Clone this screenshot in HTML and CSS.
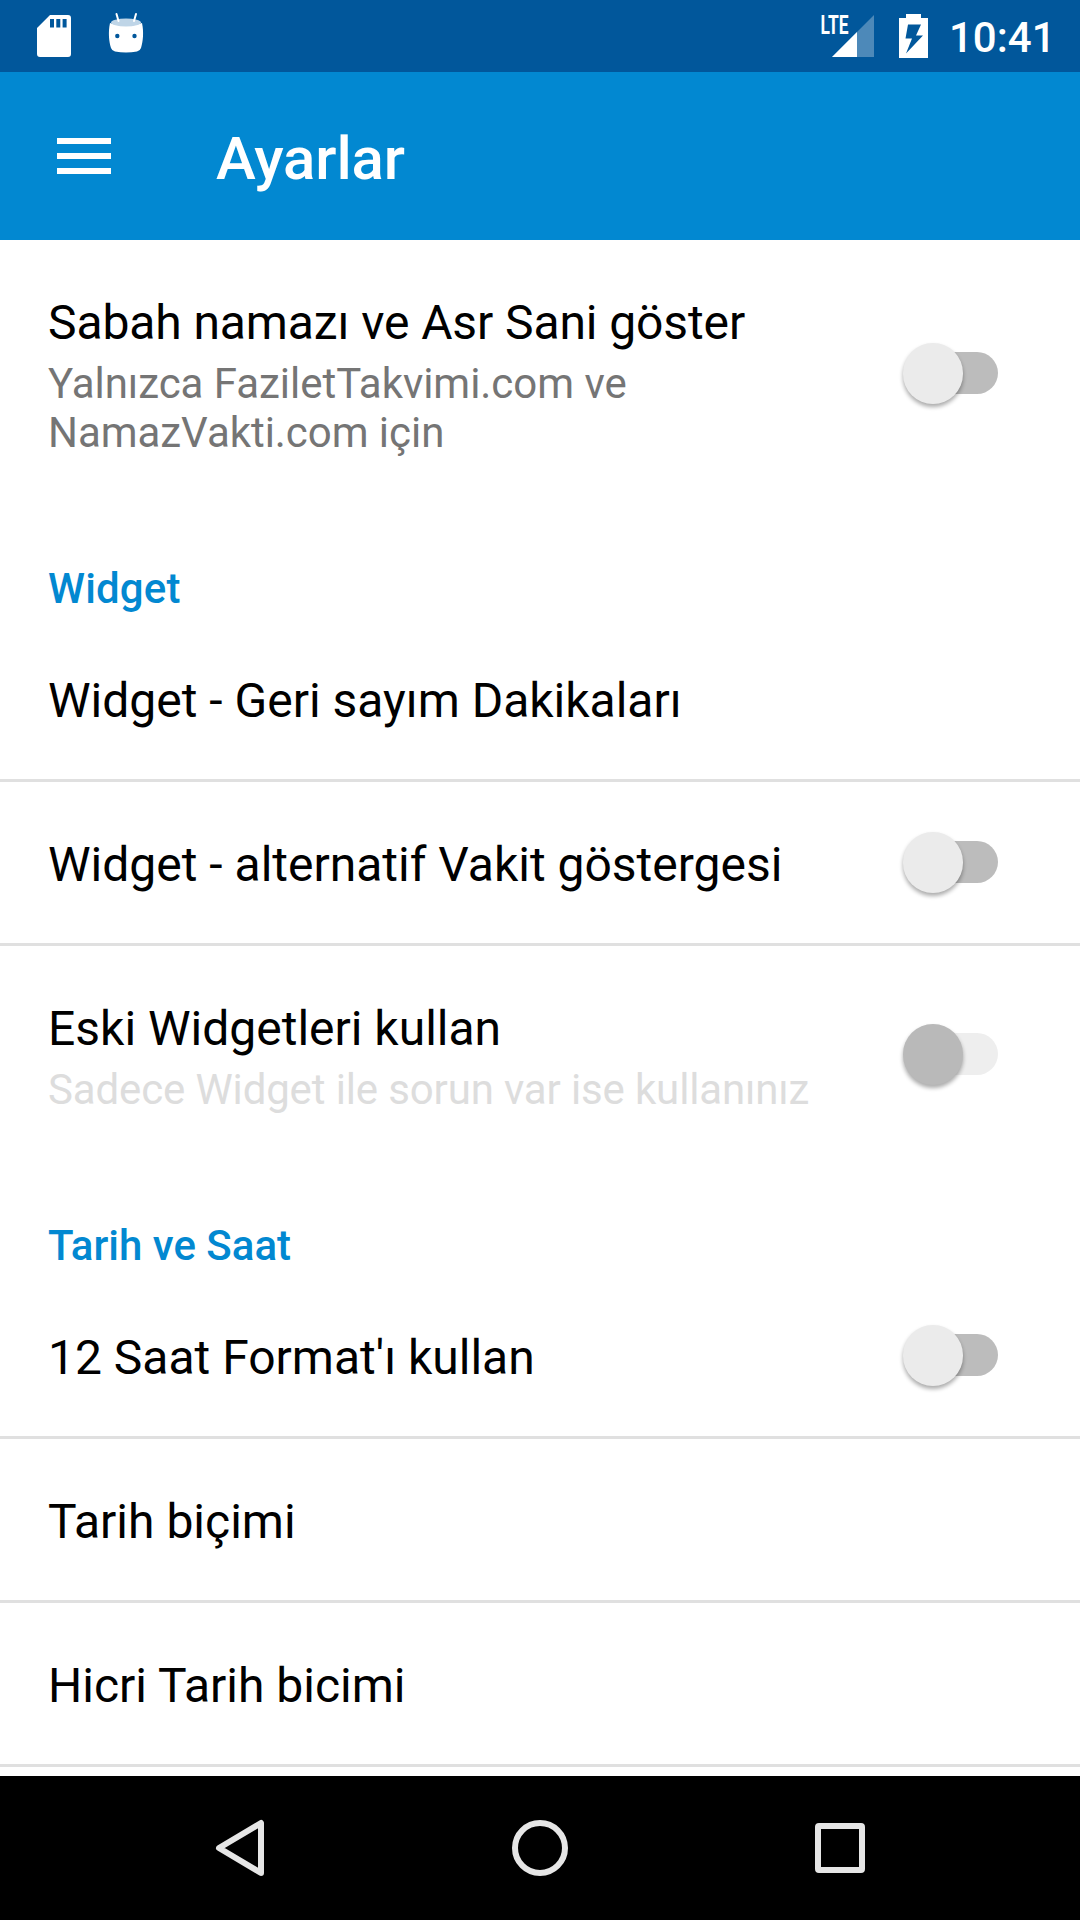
FILE: index.html
```html
<!DOCTYPE html>
<html lang="tr"><head><meta charset="utf-8"><title>Ayarlar</title><link rel="stylesheet" href="styles.css"></head>
<body>
<header class="status">
<svg class="status-left" width="160" height="72" viewBox="0 0 160 72"><path fill="#fff" fill-rule="evenodd" d="M50 15h18q3 0 3 3v36q0 3-3 3H40q-3 0-3-3V28ZM50 19v8.500h4V19Zm6.300 0v8.500h4V19Zm6.300 0v8.500h4V19Z"/><path fill="#fff" d="M110 23q16 6 32 0c2 9 1 19-1 25q-1 3-4 3.500q-11 2-22 0-3-.5-4-3.500c-2-6-3-16-1-25Z"/><ellipse cx="126" cy="22.500" rx="15" ry="4" fill="#bfd5e7"/><path stroke="#fff" stroke-width="2" stroke-linecap="round" d="m116.500 14 2 7m17.500-7-2 7"/><circle cx="117.300" cy="36" r="2.200" fill="#01579b"/><circle cx="134.500" cy="36" r="2.200" fill="#01579b"/></svg>
<svg class="status-right" width="130" height="72" viewBox="810 0 130 72"><path fill="#4d89b9" d="M874 15v42h-42Z"/><path fill="#fff" d="M857 32v25h-25Z"/><text class="lte" x="820.500" y="33.500" textLength="28" lengthAdjust="spacingAndGlyphs">LTE</text><path fill="#fff" fill-rule="evenodd" d="M906 14h15v4h7v40h-29V18h7ZM908 24.500l-2.500 14h6.500l-6 15 17-18h-7l5-11Z"/></svg>
<span class="time">10:41</span>
</header>
<div class="toolbar"><svg width="54" height="36" viewBox="0 0 54 36"><path fill="#fff" d="M0 0h54v6H0Zm0 15h54v6H0Zm0 15h54v6H0Z"/></svg><h1>Ayarlar</h1></div>
<main class="settings">
<section class="row first"><div><h3 class="snug">Sabah namazı ve Asr Sani göster</h3><p>Yalnızca FaziletTakvimi.com ve<br>NamazVakti.com için</p></div><i class="switch"></i></section>
<h2 class="wide">Widget</h2>
<section class="row"><h3>Widget - Geri sayım Dakikaları</h3></section>
<section class="row line"><h3>Widget - alternatif Vakit göstergesi</h3><i class="switch"></i></section>
<section class="row line old"><div><h3>Eski Widgetleri kullan</h3><p>Sadece Widget ile sorun var ise kullanınız</p></div><i class="switch disabled"></i></section>
<h2>Tarih ve Saat</h2>
<section class="row"><h3>12 Saat Format'ı kullan</h3><i class="switch"></i></section>
<section class="row line"><h3>Tarih biçimi</h3></section>
<section class="row line"><h3>Hicri Tarih bicimi</h3></section>
<div class="line"></div>
</main>
<nav><svg width="1080" height="144" viewBox="0 0 1080 144" fill="none" stroke="#e6e6e6" stroke-width="6"><path stroke-linejoin="round" d="M261 47v50l-42-25Z"/><circle cx="540" cy="72" r="25"/><rect x="818" y="50" width="44" height="44" rx="1" stroke-linejoin="round"/></svg></nav>
</body></html>
```
FILE: styles.css
```css
* { box-sizing: border-box; }
body { margin: 0; width: 1080px; height: 1920px; display: flex; flex-direction: column; overflow: hidden; background: #fff; color: #000; font-family: Roboto, sans-serif; }
h1, h2, h3, p { margin: 0; }
svg { display: block; flex: none; }
.status { height: 72px; flex: none; display: flex; background: #01579b; color: #fff; }
.status-right { margin-left: 650px; }
.lte { font: 700 26px Roboto, sans-serif; fill: #fff; }
.time { margin-left: 9px; font-size: 42px; line-height: 75px; font-weight: 500; white-space: nowrap; }
.toolbar { height: 168px; flex: none; display: flex; align-items: center; padding-left: 57px; background: #0288d1; color: #fff; }
h1 { margin-left: 105px; font-size: 60px; font-weight: 500; line-height: 70px; padding-top: 6px; letter-spacing: -.1px; }
.settings { height: 1536px; flex: none; overflow: hidden; }
.row { height: 164px; display: flex; align-items: flex-start; justify-content: space-between; padding: 57px 82px 0 48px; }
.line { border-top: 3px solid #e0e0e0; }
.row.line { padding-top: 54px; }
.row.first { height: 266px; padding-top: 54px; }
.row.old { height: 220px; }
h3 { font-size: 48px; line-height: 57px; font-weight: 400; white-space: nowrap; }
.snug { letter-spacing: -.1px; }
p { margin-top: 8px; font-size: 42px; line-height: 49px; color: #757575; white-space: nowrap; letter-spacing: -.04px; }
.old p { color: #ddd; letter-spacing: -.14px; }
h2 { height: 109px; padding: 58px 48px 0; font-size: 42px; line-height: 49px; font-weight: 500; color: #0288d1; }
.wide { letter-spacing: .15px; }
.switch { position: relative; width: 96px; height: 62px; margin-top: -5px; flex: none; display: flex; align-items: center; }
.first .switch { margin-top: 48px; }
.old .switch { margin-top: 23px; }
.switch::before { content: ""; width: 78px; height: 42px; margin-left: 18px; border-radius: 21px; background: #bcbcbc; }
.switch::after { content: ""; position: absolute; left: .5px; top: 1px; width: 60.5px; height: 60.5px; border-radius: 50%; background: #ebebeb; box-shadow: 0 3px 4px #0005; }
.switch.disabled::before { background: #eee; }
.switch.disabled::after { background: #b9b9b9; }
nav { height: 144px; flex: none; background: #000; }
```
